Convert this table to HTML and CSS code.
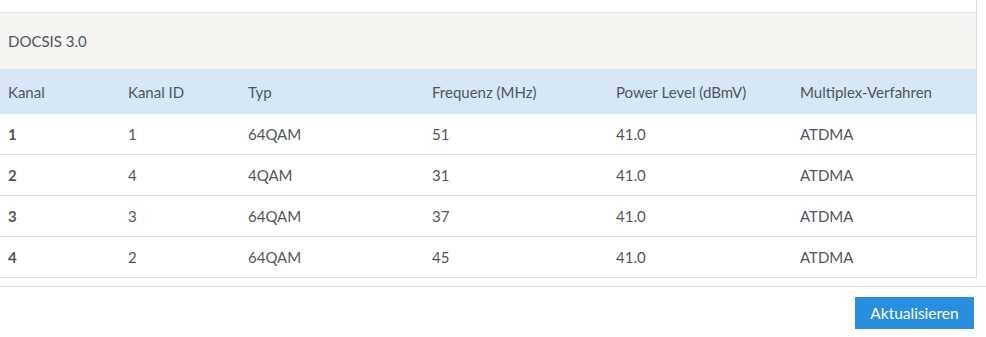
FILE: index.html
```html
<!DOCTYPE html>
<html lang="de">
<head>
<meta charset="utf-8">
<link rel="stylesheet" href="styles.css">
<title>DOCSIS 3.0</title>
</head>
<body>
<div class="box">
  <div class="heading">DOCSIS 3.0</div>
  <table class="channels">
    <colgroup>
      <col class="c1"><col class="c2"><col class="c3"><col class="c4"><col class="c5"><col class="c6">
    </colgroup>
    <thead>
      <tr><th>Kanal</th><th>Kanal ID</th><th>Typ</th><th>Frequenz (MHz)</th><th>Power Level (dBmV)</th><th>Multiplex-Verfahren</th></tr>
    </thead>
    <tbody>
      <tr><td class="num">1</td><td>1</td><td>64QAM</td><td>51</td><td>41.0</td><td>ATDMA</td></tr>
      <tr><td class="num">2</td><td>4</td><td>4QAM</td><td>31</td><td>41.0</td><td>ATDMA</td></tr>
      <tr><td class="num">3</td><td>3</td><td>64QAM</td><td>37</td><td>41.0</td><td>ATDMA</td></tr>
      <tr><td class="num">4</td><td>2</td><td>64QAM</td><td>45</td><td>41.0</td><td>ATDMA</td></tr>
    </tbody>
  </table>
</div>
<div class="footer">
  <button class="btn">Aktualisieren</button>
</div>
</body>
</html>
```

FILE: styles.css
```css
html, body {
  margin: 0;
  padding: 0;
  background: #fff;
}
body {
  font-family: "Lato", "Open Sans", "Liberation Sans", sans-serif;
  font-size: 15px;
  color: #505660;
  width: 986px;
}
.box {
  width: 976px;
  border-right: 1px solid #ddd;
  padding-top: 12px;
}
.heading {
  border-top: 1px solid #e3e3e3;
  background: #f5f5f3;
  height: 56px;
  line-height: 57px;
  padding-left: 8px;
  color: #4f5660;
}
.channels {
  width: 976px;
  border-collapse: collapse;
  table-layout: fixed;
}
.c1, .c2 { width: 120px; }
.c3, .c4, .c5 { width: 184px; }
.c6 { width: 184px; }
.channels th {
  background: #d6e7f5;
  font-weight: normal;
  text-align: left;
  height: 45px;
  padding: 0 8px;
  color: #4f5660;
}
.channels td {
  height: 40px;
  padding: 0 8px;
  border-bottom: 1px solid #e0e0e0;
  color: #505660;
}
.channels td.num {
  font-weight: bold;
}
.footer {
  margin-top: 8px;
  border-top: 1px solid #ddd;
  padding: 10px 12px 0 0;
  display: flex;
  justify-content: flex-end;
}
.btn {
  background: #288ee0;
  color: #fff;
  border: none;
  font-family: inherit;
  font-size: 15.5px;
  width: 119px;
  height: 32px;
  padding: 0;
  cursor: pointer;
}
```
